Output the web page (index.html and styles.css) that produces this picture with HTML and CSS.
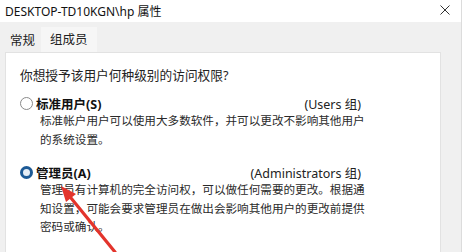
FILE: index.html
```html
<!DOCTYPE html>
<html lang="zh-CN">
<head>
<meta charset="utf-8">
<link rel="stylesheet" href="styles.css">
</head>
<body>
<div class="window">
  <div class="titlebar">
    <span class="title">DESKTOP-TD10KGN\hp 属性</span>
    <svg class="close" width="10" height="10" viewBox="0 0 10 10"><path d="M0.5 0.5L9.5 9.5M9.5 0.5L0.5 9.5" stroke="#333" stroke-width="1"/></svg>
  </div>
  <div class="tabs">
    <div class="tab">常规</div>
    <div class="tab active">组成员</div>
  </div>
  <div class="panel">
    <div class="question">你想授予该用户何种级别的访问权限?</div>
    <div class="option first">
      <div class="head">
        <span class="radio"></span>
        <span class="label">标准用户(S)</span>
        <span class="group">(Users 组)</span>
      </div>
      <div class="desc">标准帐户用户可以使用大多数软件，并可以更改不影响其他用户<br>的系统设置。</div>
    </div>
    <div class="option second">
      <div class="head">
        <span class="radio checked"></span>
        <span class="label">管理员(A)</span>
        <span class="group">(Administrators 组)</span>
      </div>
      <div class="desc">管理员有计算机的完全访问权，可以做任何需要的更改。根据通<br>知设置，可能会要求管理员在做出会影响其他用户的更改前提供<br>密码或确认。</div>
    </div>
  </div>
  <svg class="arrow" width="462" height="252" viewBox="0 0 462 252">
    <path d="M115 252 L71 198" stroke="#e3342c" stroke-width="3.2" stroke-linecap="round" fill="none"/>
    <path d="M61 186 L76 194 L66 202 Z" fill="#e3342c"/>
  </svg>
</div>
</body>
</html>
```
FILE: styles.css
```css
html, body {
  margin: 0;
  padding: 0;
}
body {
  width: 462px;
  height: 252px;
  overflow: hidden;
  background: #f0f0f0;
  font-family: "Noto Sans", "Noto Sans CJK SC", sans-serif;
  color: #1c1c1c;
}
.window {
  position: relative;
  width: 462px;
  height: 252px;
  border-right: 1px solid #dcdcdc;
  box-sizing: border-box;
}
.titlebar {
  height: 22px;
  background: #fff;
  display: flex;
  align-items: center;
  justify-content: space-between;
  padding: 0 11px 0 5px;
}
.title {
  font-size: 12px;
  color: #111;
}
.close {
  margin-top: -2px;
}
.tabs {
  height: 30px;
  display: flex;
  align-items: flex-end;
  padding-left: 4px;
  box-sizing: border-box;
}
.tab {
  font-size: 12.5px;
  padding: 0 6px 1px 6px;
  line-height: 20px;
  color: #222;
}
.tab.active {
  background: #f6f6f6;
  padding: 3px 9px 2px 9px;
  margin-left: 0;
}
.panel {
  margin-left: 5px;
  width: 436px;
  height: 210px;
  background: #fff;
  border: 1px solid #e2e2e2;
  box-sizing: border-box;
  padding: 13px 0 0 14px;
}
.question {
  font-size: 12.7px;
  line-height: 18px;
  color: #222;
}
.option.first {
  margin-top: 10px;
}
.option.second {
  margin-top: 14px;
}
.head {
  display: flex;
  align-items: center;
  width: 341px;
  height: 18px;
}
.radio {
  width: 13px;
  height: 13px;
  border-radius: 50%;
  border: 1px solid #8a8a8a;
  box-sizing: border-box;
  margin-right: 3px;
  background: #fff;
}
.radio.checked {
  border: 3.5px solid #1d5a96;
  background: #e6eef6;
}
.label {
  font-size: 12.5px;
  font-weight: bold;
  color: #111;
}
.group {
  margin-left: auto;
  font-size: 12.5px;
  color: #222;
}
.desc {
  padding-left: 20px;
  font-size: 11.6px;
  line-height: 18.5px;
  color: #2a2a2a;
  white-space: nowrap;
}
.arrow {
  position: absolute;
  left: 0;
  top: 0;
  pointer-events: none;
}
```
